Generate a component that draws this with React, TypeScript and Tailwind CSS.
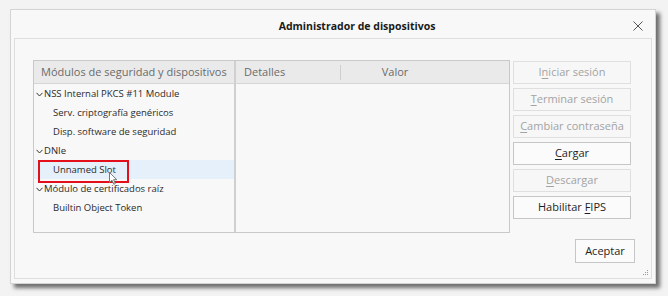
import React from 'react';

const font = { fontFamily: '"Open Sans", "Noto Sans", sans-serif' };

type Row = { label: string; level: 0 | 1; selected?: boolean };

const rows: Row[] = [
  { label: 'NSS Internal PKCS #11 Module', level: 0 },
  { label: 'Serv. criptografía genéricos', level: 1 },
  { label: 'Disp. software de seguridad', level: 1 },
  { label: 'DNIe', level: 0 },
  { label: 'Unnamed Slot', level: 1, selected: true },
  { label: 'Módulo de certificados raíz', level: 0 },
  { label: 'Builtin Object Token', level: 1 },
];

function Chevron() {
  return (
    <svg width="7" height="5" viewBox="0 0 7 5" className="mr-px">
      <path d="M0.5 0.8 L3.5 4 L6.5 0.8" fill="none" stroke="#333" strokeWidth="1" />
    </svg>
  );
}

function Cursor() {
  return (
    <svg width="9" height="13" viewBox="0 0 9 13" className="absolute left-[109px] top-[172px]">
      <path d="M0.5 0.5 L0.5 10.5 L3 8.2 L4.8 12.3 L6.3 11.6 L4.6 7.7 L7.8 7.7 Z" fill="#fff" stroke="#777" strokeWidth="1" />
    </svg>
  );
}

function Btn({ pre, u, post, disabled }: { pre?: string; u: string; post?: string; disabled?: boolean }) {
  return (
    <div
      className={
        'h-[23px] w-[118px] flex items-center justify-center border text-[11px] whitespace-nowrap ' +
        (disabled ? 'border-[#dfdfdf] bg-[#f7f7f7] text-[#a3a3a3]' : 'border-[#c6c6c6] bg-[#fbfbfb] text-[#1e1e1e]')
      }
    >
      <span>
        {pre}
        <span className="underline underline-offset-2">{u}</span>
        {post}
      </span>
    </div>
  );
}

export default function App() {
  return (
    <div className="w-[668px] h-[296px] bg-[#f3f3f3] pt-[9px] pl-[10px] relative" style={font}>
      <div className="w-[646px] h-[275px] bg-[#f8f8f8] border border-[#d4d4d4] shadow-[4px_4px_4px_rgba(0,0,0,0.55)] flex flex-col px-[3px] pb-[4px]">
        {/* title */}
        <div className="h-[28px] flex items-center justify-center relative pl-[48px] pt-[5px]">
          <span className="text-[10.5px] font-bold text-[#1a1a1a]">Administrador de dispositivos</span>
          <svg width="10" height="10" viewBox="0 0 10 10" className="absolute right-[9px] top-[11px]">
            <path d="M0.5 0.5 L9.5 9.5 M9.5 0.5 L0.5 9.5" stroke="#555" strokeWidth="1" />
          </svg>
        </div>
        {/* body */}
        <div className="flex-1 border border-[#dedede] bg-[#f8f8f8] pt-[21px] pl-[18px] flex flex-col">
          <div className="flex gap-[3px]">
            <div className="w-[477px] h-[173px] border border-[#c9c9c9] flex bg-[#f8f8f8]">
              {/* tree */}
              <div className="w-[202px] border-r-2 border-[#d0d0d0] flex flex-col">
                <div className="h-[23px] bg-[#eaeaea] border-b border-[#d6d6d6] flex items-center pl-[7px] text-[11px] text-[#6b6b6b] whitespace-nowrap">
                  Módulos de seguridad y dispositivos
                </div>
                {rows.map((r) => (
                  <div
                    key={r.label}
                    className={
                      'h-[19px] flex items-center pt-[2px] text-[9.5px] text-[#2b2b2b] ' +
                      (r.level === 0 ? 'pl-[2px]' : 'pl-[19px]') +
                      (r.selected ? ' bg-[#e6f0fa]' : '')
                    }
                  >
                    {r.level === 0 && <Chevron />}
                    {r.label}
                  </div>
                ))}
              </div>
              {/* details */}
              <div className="flex-1 flex flex-col">
                <div className="h-[23px] bg-[#eaeaea] border-b border-[#d6d6d6] flex items-center text-[11px] text-[#6b6b6b]">
                  <div className="w-[105px] pl-[8px] border-r border-[#cfcfcf] h-[15px] flex items-center">Detalles</div>
                  <div className="w-[108px] text-center">Valor</div>
                </div>
              </div>
            </div>
            <div className="flex flex-col gap-[4px] pt-px">
              <Btn pre="I" u="n" post="iciar sesión" disabled />
              <Btn u="T" post="erminar sesión" disabled />
              <Btn u="C" post="ambiar contraseña" disabled />
              <Btn u="C" post="argar" />
              <Btn u="D" post="escargar" disabled />
              <Btn pre="Habilitar " u="F" post="IPS" />
            </div>
          </div>
          <div className="flex justify-end pr-[16px] mt-[6px]">
            <div className="h-[24px] w-[60px] border border-[#c6c6c6] bg-[#fbfbfb] flex items-center justify-center text-[11px] text-[#1e1e1e]">
              Aceptar
            </div>
          </div>
          <div className="flex justify-end pr-[2px] mt-auto pb-[2px]">
            <svg width="6" height="6" viewBox="0 0 6 6">
              <rect x="4" y="0" width="1" height="1" fill="#999" />
              <rect x="2" y="2" width="1" height="1" fill="#999" />
              <rect x="4" y="2" width="1" height="1" fill="#999" />
              <rect x="0" y="4" width="1" height="1" fill="#999" />
              <rect x="2" y="4" width="1" height="1" fill="#999" />
              <rect x="4" y="4" width="1" height="1" fill="#999" />
            </svg>
          </div>
        </div>
      </div>
      {/* annotation */}
      <div className="absolute left-[38px] top-[160px] w-[91px] h-[23px] border-2 border-[#e3101c]" />
      <Cursor />
    </div>
  );
}
